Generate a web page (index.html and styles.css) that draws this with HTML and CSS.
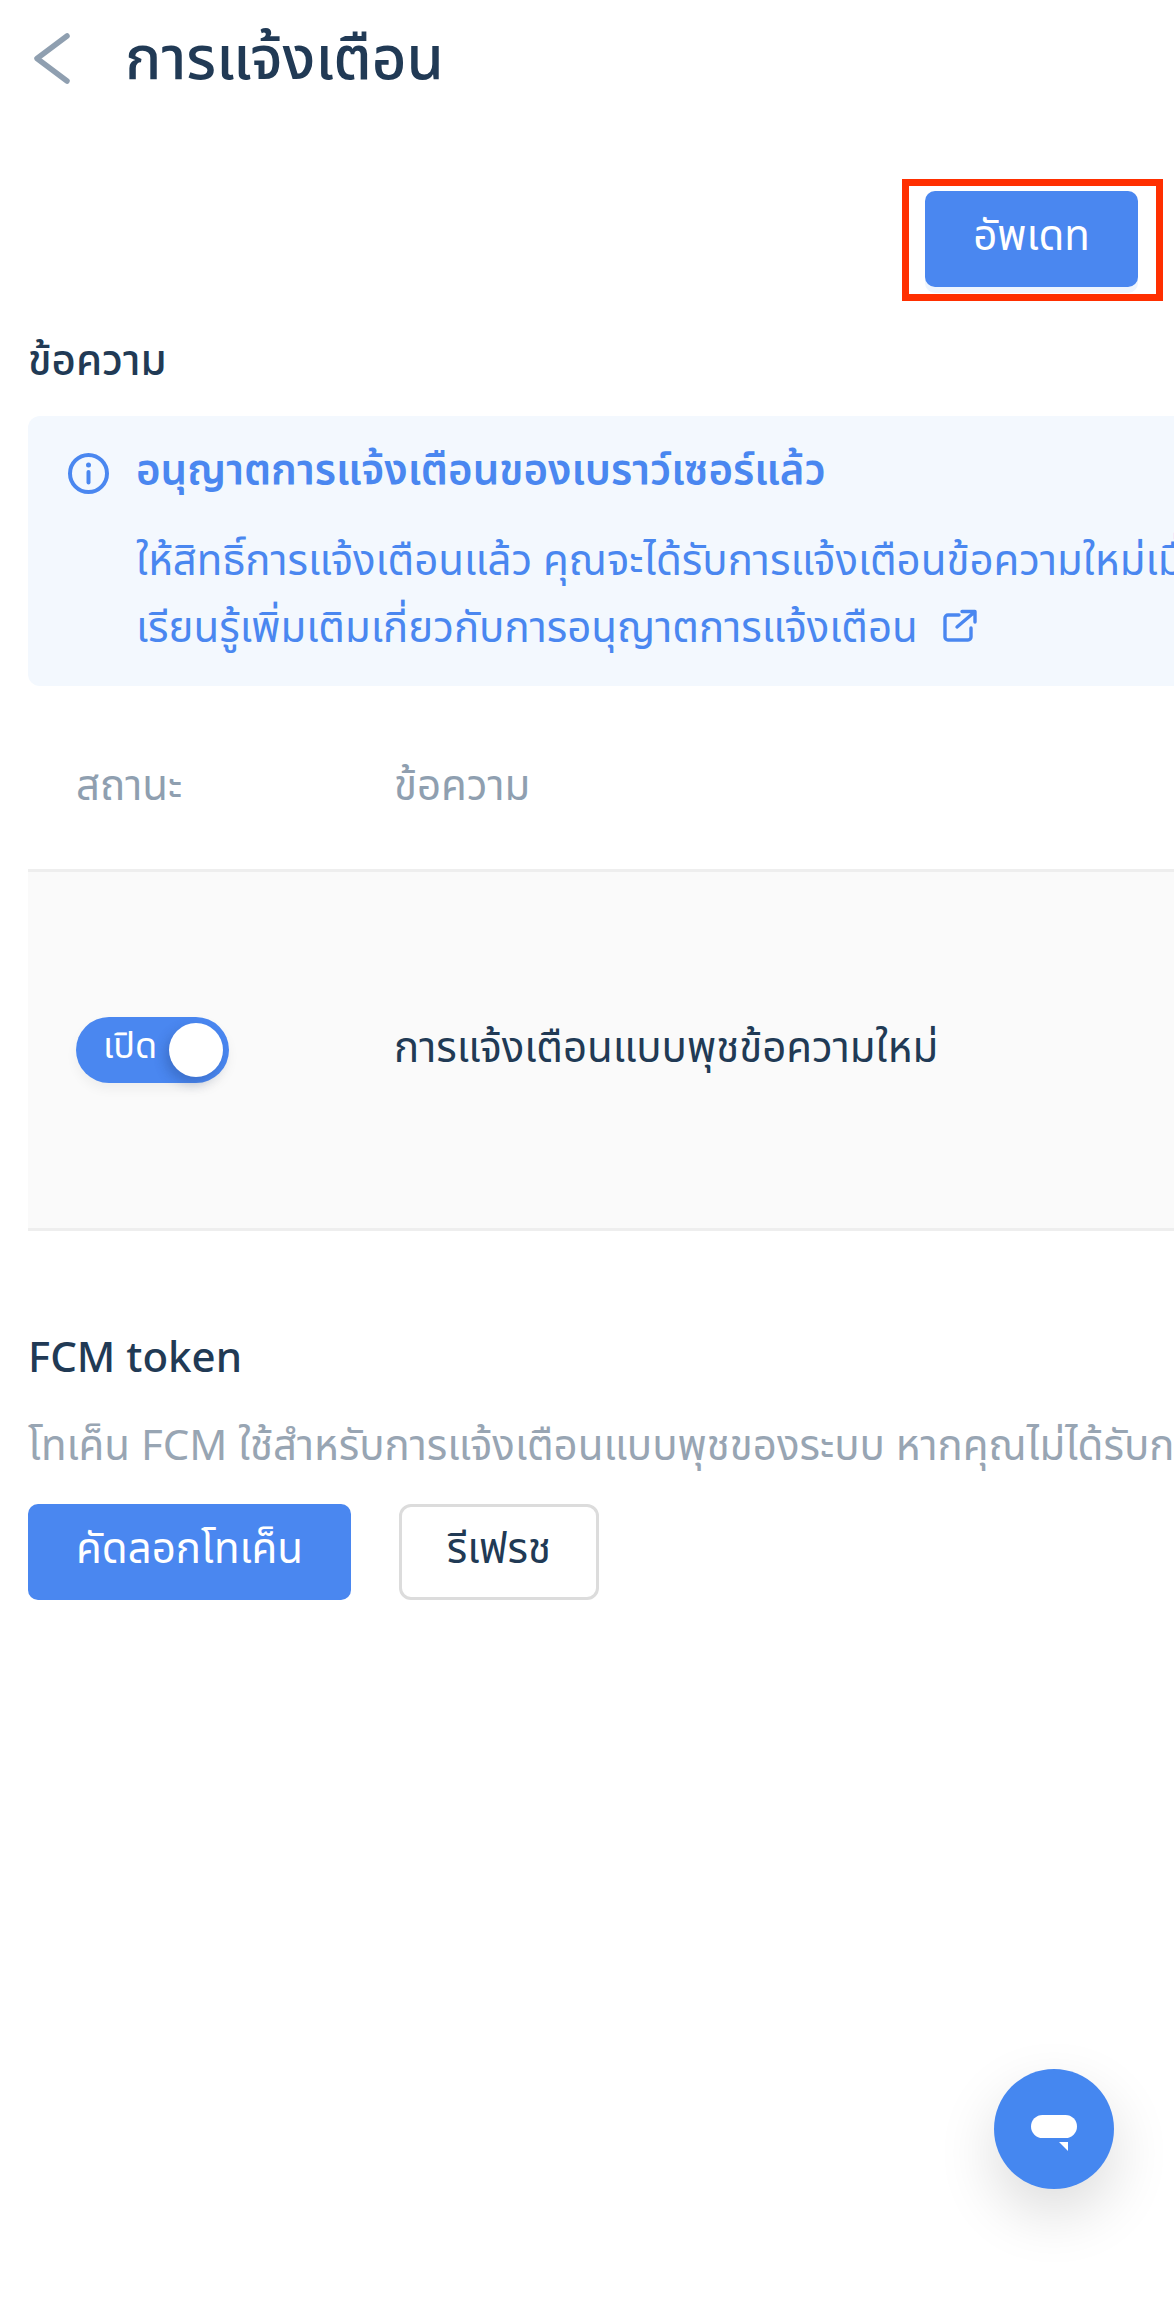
FILE: index.html
```html
<!DOCTYPE html>
<html lang="th">
<head>
<meta charset="utf-8">
<title>การแจ้งเตือน</title>
<link rel="stylesheet" href="styles.css">
</head>
<body>
<div class="page">
  <header class="topbar">
    <svg class="back" viewBox="0 0 36 51" aria-hidden="true"><path d="M33 3 L3 25.5 L33 48" /></svg>
    <h1 class="title">การแจ้งเตือน</h1>
  </header>
  <div class="actions">
    <div class="highlight"><button class="btn btn-primary btn-update">อัพเดท</button></div>
  </div>
  <main class="content">
    <h2 class="section-label">ข้อความ</h2>
    <section class="alert">
      <svg class="alert-icon" viewBox="0 0 41 41" aria-hidden="true">
        <circle cx="20.5" cy="20.5" r="18.5"/>
        <path d="M20.5 19 V29.5"/>
        <circle class="dot" cx="20.5" cy="12" r="2.5"/>
      </svg>
      <div class="alert-body">
        <div class="alert-title">อนุญาตการแจ้งเตือนของเบราว์เซอร์แล้ว</div>
        <div class="alert-text">ให้สิทธิ์การแจ้งเตือนแล้ว คุณจะได้รับการแจ้งเตือนข้อความใหม่เมื่อมีการส่งข้อความถึงคุณ</div>
        <div class="alert-text alert-link">เรียนรู้เพิ่มเติมเกี่ยวกับการอนุญาตการแจ้งเตือน
          <svg class="ext" viewBox="0 0 34 33" aria-hidden="true"><path d="M16 6 H5 a3 3 0 0 0 -3 3 V28 a3 3 0 0 0 3 3 H25 a3 3 0 0 0 3 -3 V19 M19 2.5 H32 V13 M14 18 L31 3.5"/></svg>
        </div>
      </div>
    </section>
    <div class="table">
      <div class="thead">
        <div class="col-status">สถานะ</div>
        <div class="col-msg">ข้อความ</div>
      </div>
      <div class="trow">
        <div class="col-status">
          <div class="toggle"><span class="toggle-label">เปิด</span><span class="knob"></span></div>
        </div>
        <div class="col-msg row-text">การแจ้งเตือนแบบพุชข้อความใหม่</div>
      </div>
    </div>
    <section class="fcm">
      <h2 class="fcm-title">FCM token</h2>
      <p class="fcm-desc">โทเค็น FCM ใช้สำหรับการแจ้งเตือนแบบพุชของระบบ หากคุณไม่ได้รับการแจ้งเตือน โปรดคัดลอกโทเค็น</p>
      <div class="fcm-actions">
        <button class="btn btn-primary btn-copy">คัดลอกโทเค็น</button>
        <button class="btn btn-outline">รีเฟรช</button>
      </div>
    </section>
  </main>
  <button class="chat" aria-label="แชท">
    <svg viewBox="0 0 46 36" aria-hidden="true"><rect x="0" y="0" width="46" height="23" rx="11.5"/><path d="M28 27 H37 V36 Z"/></svg>
  </button>
</div>
</body>
</html>
```
FILE: styles.css
```css
* { box-sizing: border-box; }
html, body { margin: 0; padding: 0; background: #fff; }
body {
  font-family: "Noto Sans", "Noto Sans Thai", "Open Sans", sans-serif;
  color: #213a55;
  width: 1174px;
  height: 2308px;
  overflow: hidden;
}
.page { position: relative; width: 1174px; height: 2308px; overflow: hidden; }
.topbar { display: flex; align-items: center; height: 116px; padding-left: 34px; gap: 55px; }
.back { width: 36px; height: 51px; flex: none; fill: none; stroke: #8f9fb0; stroke-width: 5.5; stroke-linecap: round; stroke-linejoin: round; }
.title { margin: 0 0 4px; font-size: 60px; font-weight: 500; line-height: 1; }
.actions { display: flex; justify-content: flex-end; padding: 63px 11px 0 0; }
.highlight { border: 7px solid #ff2f00; padding: 5px 18px 7px 16px; width: 261px; height: 122px; }
.btn { font-family: inherit; font-size: 42px; border-radius: 10px; border: 0; padding: 0 0 4px; height: 96px; }
.btn-primary { background: #4a87f0; color: #fff; }
.btn-update { display: block; width: 213px; box-shadow: 0 6px 0 #eef5fe; }
.content { padding: 0 0 0 28px; width: 1500px; }
.section-label { margin: 33px 0 0; font-size: 42px; font-weight: 500; line-height: 50px; height: 51px; }
.alert { display: flex; margin-top: 31px; height: 270px; background: #f3f8fe; border-radius: 12px 0 0 12px; padding: 27px 0 0 40px; color: #4a87f0; }
.alert-icon { width: 41px; height: 41px; margin-top: 10px; flex: none; fill: none; stroke: #4a87f0; stroke-width: 4; stroke-linecap: round; }
.alert-icon .dot { fill: #4a87f0; stroke: none; }
.alert-body { margin-left: 27px; white-space: nowrap; }
.alert-title { font-size: 42px; font-weight: 600; line-height: 50px; }
.alert-text { font-size: 42px; line-height: 67px; }
.alert-title + .alert-text { margin-top: 32px; }
.ext { width: 34px; height: 33px; margin-left: 14px; vertical-align: 0; fill: none; stroke: #4a87f0; stroke-width: 3.4; stroke-linecap: round; stroke-linejoin: round; }
.thead, .trow { display: flex; align-items: center; padding-left: 48px; }
.col-status { width: 318px; flex: none; }
.thead { height: 186px; padding-top: 19px; font-size: 42px; color: #8f9fb0; border-bottom: 3px solid #eeeeee; }
.trow { height: 359px; font-size: 42px; background: #fafafa; border-bottom: 3px solid #eeeeee; }
.row-text { margin-top: -3px; }
.toggle { position: relative; width: 153px; height: 66px; border-radius: 33px; background: #4a87f0; color: #fff; box-shadow: 0 6px 12px rgba(0,0,0,.05); }
.toggle-label { position: absolute; left: 27px; top: 7px; font-size: 36px; line-height: 42px; }
.knob { position: absolute; right: 6px; top: 6px; width: 54px; height: 54px; border-radius: 50%; background: #fff; box-shadow: -4px 6px 12px rgba(30,60,120,.3); }
.fcm { margin-top: 100px; }
.fcm-title { margin: 0; font-size: 42px; font-weight: 500; line-height: 50px; }
.fcm-desc { margin: 38px 0 0; font-size: 42px; line-height: 50px; color: #98a5b3; white-space: nowrap; }
.fcm-actions { display: flex; gap: 48px; margin-top: 35px; }
.btn-copy { width: 323px; }
.btn-outline { width: 200px; background: #fff; border: 3px solid #dcdcdc; border-radius: 12px; color: #213a55; }
.chat { position: absolute; left: 994px; top: 2069px; width: 120px; height: 120px; border-radius: 50%; border: 0; padding: 0; background: #4587f0; box-shadow: 0 24px 60px rgba(0,0,0,.14); display: flex; align-items: center; justify-content: center; }
.chat svg { width: 46px; height: 36px; fill: #fff; margin-top: 7px; }
```
